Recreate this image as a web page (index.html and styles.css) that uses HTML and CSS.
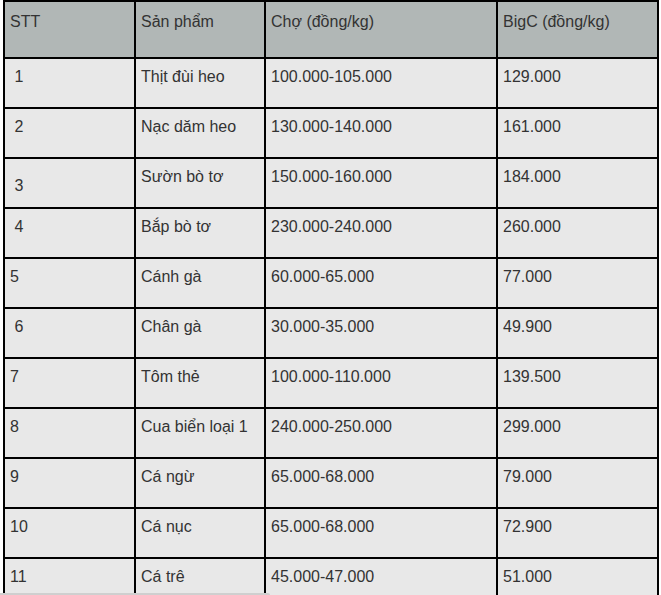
FILE: index.html
```html
<!DOCTYPE html>
<html lang="vi">
<head>
<meta charset="utf-8">
<title>Bảng giá</title>
<link rel="stylesheet" href="styles.css">
</head>
<body>
<table class="price">
  <thead>
    <tr><th class="c1">STT</th><th class="c2">Sản phẩm</th><th class="c3">Chợ (đồng/kg)</th><th class="c4">BigC (đồng/kg)</th></tr>
  </thead>
  <tbody>
    <tr><td>&nbsp;1</td><td>Thịt đùi heo</td><td>100.000-105.000</td><td>129.000</td></tr>
    <tr><td>&nbsp;2</td><td>Nạc dăm heo</td><td>130.000-140.000</td><td>161.000</td></tr>
    <tr><td class="mid">&nbsp;3</td><td>Sườn bò tơ</td><td>150.000-160.000</td><td>184.000</td></tr>
    <tr><td>&nbsp;4</td><td>Bắp bò tơ</td><td>230.000-240.000</td><td>260.000</td></tr>
    <tr><td>5</td><td>Cánh gà</td><td>60.000-65.000</td><td>77.000</td></tr>
    <tr><td>&nbsp;6</td><td>Chân gà</td><td>30.000-35.000</td><td>49.900</td></tr>
    <tr><td>7</td><td>Tôm thẻ</td><td>100.000-110.000</td><td>139.500</td></tr>
    <tr><td>8</td><td>Cua biển loại 1</td><td>240.000-250.000</td><td>299.000</td></tr>
    <tr><td>9</td><td>Cá ngừ</td><td>65.000-68.000</td><td>79.000</td></tr>
    <tr><td>10</td><td>Cá nục</td><td>65.000-68.000</td><td>72.900</td></tr>
    <tr class="last"><td>11</td><td>Cá trê</td><td>45.000-47.000</td><td>51.000</td></tr>
  </tbody>
</table>
<div class="scrollbar"></div>
</body>
</html>
```
FILE: styles.css
```css
html, body {
  margin: 0;
  padding: 0;
  background: #ffffff;
  overflow: hidden;
}
body {
  font-family: "Liberation Sans", Arial, sans-serif;
  font-size: 16px;
  line-height: 24px;
  color: #333333;
}
.price {
  border-collapse: separate;
  border-spacing: 0;
  table-layout: fixed;
  width: 656px;
  margin-left: 3px;
  border-top: 2px solid #000;
  border-left: 2px solid #000;
}
.price th,
.price td {
  box-sizing: border-box;
  border-right: 2px solid #000;
  border-bottom: 2px solid #000;
  text-align: left;
  vertical-align: top;
  font-weight: normal;
  padding: 6px 5px 0;
}
.price th {
  background: #b1b7b6;
  height: 57px;
  padding-top: 8px;
}
.price td {
  background: #e8e8e8;
  height: 50px;
}
.price .last td {
  height: 37px;
  border-bottom: 0;
}
.price td.mid {
  vertical-align: middle;
}
.c1 { width: 131px; }
.c2 { width: 130px; }
.c3 { width: 232px; }
.c4 { width: 161px; }
.scrollbar {
  position: fixed;
  left: 0;
  bottom: 0;
  width: 270px;
  height: 2px;
  background: #cfcfcf;
  border-radius: 0 2px 0 0;
}
```
